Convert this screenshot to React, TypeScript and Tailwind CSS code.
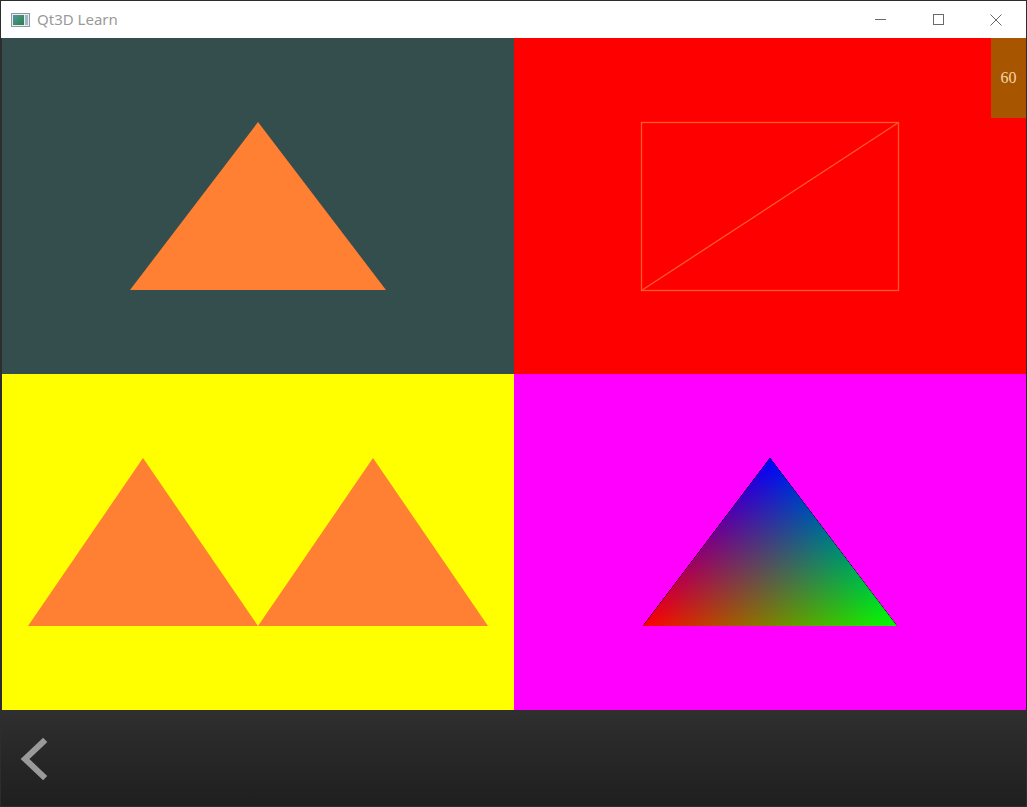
import React from "react"

type Tri = [number, number, number, number, number, number]

const orange = "#ff7f33"

function Quadrant({ bg, children }: { bg: string; children?: React.ReactNode }) {
  return (
    <div className={`relative h-[336px] w-[512px] ${bg}`}>
      <svg width="512" height="336" viewBox="0 0 512 336" className="block">
        {children}
      </svg>
    </div>
  )
}

function Triangle({ pts, fill }: { pts: Tri; fill: string }) {
  const [a, b, c, d, e, f] = pts
  return <polygon points={`${a},${b} ${c},${d} ${e},${f}`} fill={fill} />
}

function ColorTriangle() {
  // vertex colours mixed additively: blue apex, red left, green right
  const pts = "256,84 129,252 383,252"
  return (
    <g style={{ isolation: "isolate" }}>
      <defs>
        <linearGradient id="gBlue" gradientUnits="userSpaceOnUse" x1="256" y1="84" x2="256" y2="252">
          <stop offset="0" stopColor="#0000ff" />
          <stop offset="1" stopColor="#000000" />
        </linearGradient>
        <linearGradient id="gRed" gradientUnits="userSpaceOnUse" x1="129" y1="252" x2="290.6" y2="129.8">
          <stop offset="0" stopColor="#ff0000" />
          <stop offset="1" stopColor="#000000" />
        </linearGradient>
        <linearGradient id="gGreen" gradientUnits="userSpaceOnUse" x1="383" y1="252" x2="221.4" y2="129.8">
          <stop offset="0" stopColor="#00ff00" />
          <stop offset="1" stopColor="#000000" />
        </linearGradient>
      </defs>
      <polygon points={pts} fill="#000" />
      <polygon points={pts} fill="url(#gBlue)" style={{ mixBlendMode: "plus-lighter" }} />
      <polygon points={pts} fill="url(#gRed)" style={{ mixBlendMode: "plus-lighter" }} />
      <polygon points={pts} fill="url(#gGreen)" style={{ mixBlendMode: "plus-lighter" }} />
    </g>
  )
}

function TitleBar() {
  return (
    <div className="flex h-[37px] items-center bg-white">
      {/* app icon */}
      <div className="ml-[10px] flex h-[14px] w-[19px] border border-[#8a9aa0] bg-[#e8eef0] p-px">
        <div className="h-full w-[11px] bg-gradient-to-br from-[#5a8fb0] via-[#3d8f6a] to-[#2f7a5a]" />
        <div className="ml-px h-full w-[3px] bg-[#9fb8c4]" />
      </div>
      <span className="ml-[7px] text-[15px] text-[#9a9a9a]" style={{ fontFamily: "'Noto Sans', 'Open Sans', sans-serif" }}>
        Qt3D Learn
      </span>
      <div className="ml-auto flex h-full pr-px">
        <div className="flex w-[58px] items-center justify-center">
          <div className="h-px w-[11px] bg-[#6a6a6a]" />
        </div>
        <div className="flex w-[58px] items-center justify-center">
          <div className="h-[11px] w-[11px] border border-[#6a6a6a]" />
        </div>
        <div className="flex w-[58px] items-center justify-center">
          <svg width="12" height="12" viewBox="0 0 12 12">
            <path d="M0.5 0.5 L11.5 11.5 M11.5 0.5 L0.5 11.5" stroke="#6a6a6a" strokeWidth="1" />
          </svg>
        </div>
      </div>
    </div>
  )
}

export default function App() {
  return (
    <div className="h-[807px] w-[1027px] overflow-hidden border border-[#2d2d2d] bg-[#2d2d2d]">
      <TitleBar />
      <div className="relative flex flex-col pl-px">
        <div className="flex">
          <Quadrant bg="bg-[#344e4e]">
            <Triangle pts={[256, 84, 128, 252, 384, 252]} fill={orange} />
          </Quadrant>
          <Quadrant bg="bg-[#ff0000]">
            <g stroke="#ff5a28" strokeWidth="1.3" fill="none">
              <rect x="127.5" y="84.5" width="257" height="168" />
              <line x1="127.5" y1="252.5" x2="384.5" y2="84.5" />
            </g>
          </Quadrant>
        </div>
        <div className="flex">
          <Quadrant bg="bg-[#ffff00]">
            <Triangle pts={[141, 84, 26, 252, 256, 252]} fill={orange} />
            <Triangle pts={[371, 84, 256, 252, 486, 252]} fill={orange} />
          </Quadrant>
          <Quadrant bg="bg-[#ff00ff]">
            <ColorTriangle />
          </Quadrant>
        </div>
        {/* fps counter */}
        <div
          className="absolute right-0 top-0 flex h-[80px] w-[35px] items-center justify-center bg-[#a85500] text-[16px] text-[#f2d6a8]"
          style={{ fontFamily: "'Liberation Serif', serif" }}
        >
          60
        </div>
      </div>
      <div className="flex h-[96px] items-center bg-gradient-to-b from-[#2f2f2f] to-[#1f1f1f] pl-px">
        <svg width="60" height="60" viewBox="0 0 60 60" className="ml-[4px]">
          <path d="M37 14 L19 31 L37 48" stroke="#9a9a9a" strokeWidth="6" fill="none" strokeLinecap="square" />
        </svg>
      </div>
    </div>
  )
}
